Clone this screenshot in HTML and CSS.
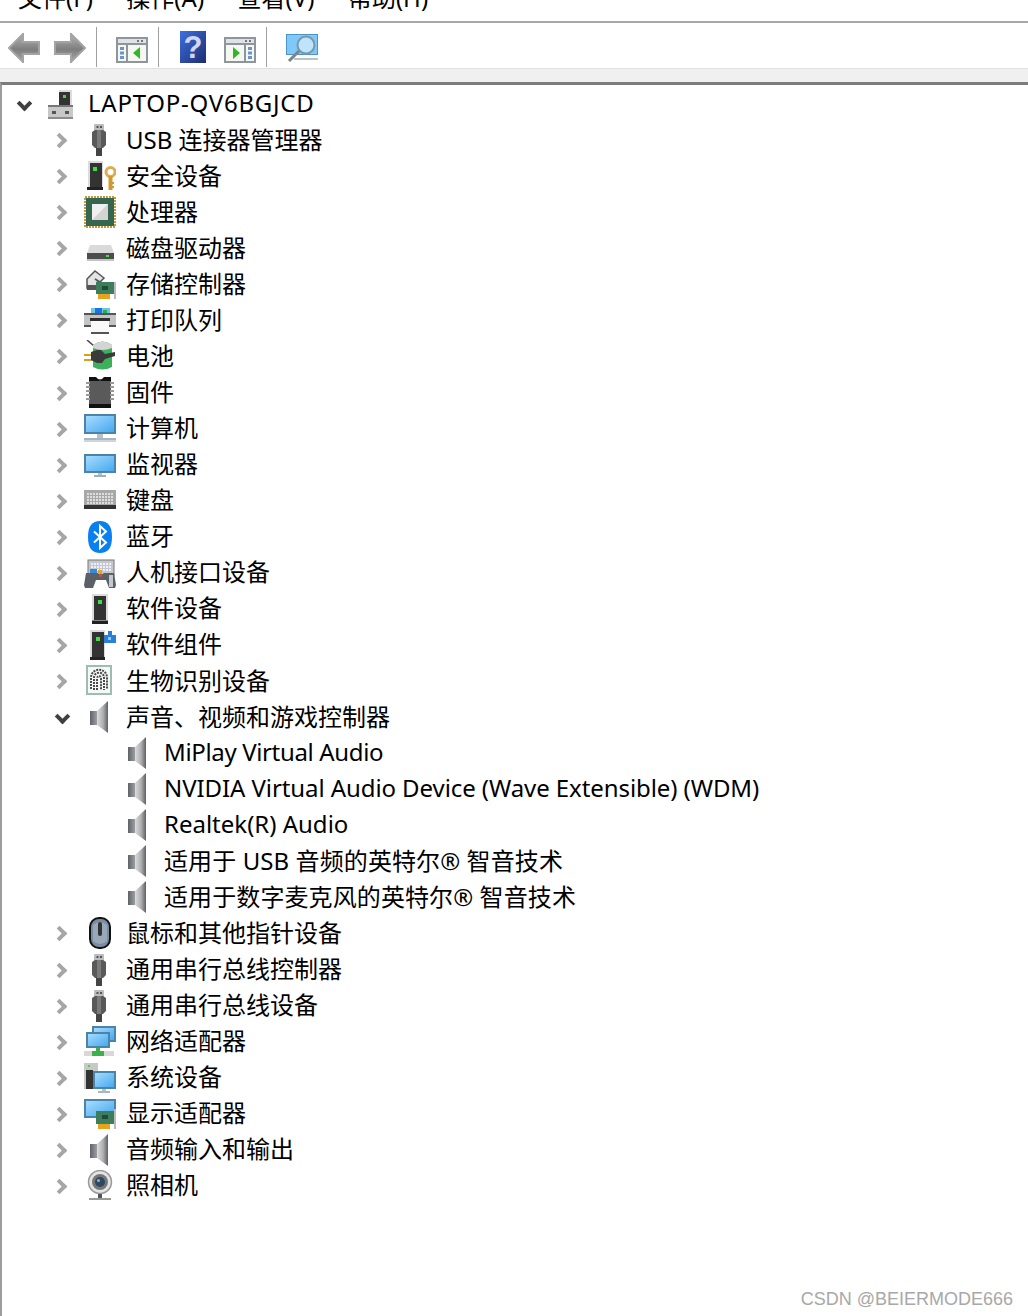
FILE: index.html
```html
<!DOCTYPE html>
<html lang="zh">
  <head>
    <meta charset="utf-8">
    <title>设备管理器</title>
    <link rel="stylesheet" href="styles.css">
  </head>
  <body>
    <svg class="defs" width="0" height="0">
      <defs>
        <linearGradient id="g-gray" x1="0" y1="0" x2="1" y2="0"><stop offset="0" stop-color="#5f6368"/><stop offset="1" stop-color="#a4a6aa"/></linearGradient>
        <linearGradient id="g-arrow" x1="0" y1="0" x2="0" y2="1"><stop offset="0" stop-color="#b4b4b4"/><stop offset="0.55" stop-color="#7e7e7e"/><stop offset="1" stop-color="#a8a8a8"/></linearGradient>
        <linearGradient id="g-screen" x1="0" y1="0" x2="1" y2="1"><stop offset="0" stop-color="#a6dcff"/><stop offset="1" stop-color="#47a8ee"/></linearGradient>
        <linearGradient id="g-cone" x1="0" y1="0" x2="1" y2="0"><stop offset="0" stop-color="#dcdcdc"/><stop offset="0.55" stop-color="#b0b0b0"/><stop offset="1" stop-color="#5c6068"/></linearGradient>
        <linearGradient id="g-help" x1="0" y1="0" x2="1" y2="1"><stop offset="0" stop-color="#3e70e0"/><stop offset="1" stop-color="#1c2c70"/></linearGradient>

        <symbol id="i-host" viewBox="0 0 32 32">
          <path d="M13 2h13v16H13z" fill="#333"/><path d="M13 2h13v2H13zM24 4h2v14h-2z" fill="#ddd"/>
          <rect x="17" y="7" width="3" height="3" fill="#3de03d"/>
          <rect x="2" y="17" width="25" height="14" fill="#c8c8c8"/><rect x="2" y="17" width="25" height="2" fill="#777"/>
          <rect x="6" y="23" width="4" height="3" fill="#555"/><rect x="19" y="23" width="4" height="3" fill="#555"/><rect x="2" y="29" width="25" height="2" fill="#8c8c8c"/>
        </symbol>

        <symbol id="i-usb" viewBox="0 0 32 32">
          <rect x="10" y="0" width="10" height="9" rx="1" fill="#bcbcbc"/><rect x="12.500" y="2" width="2" height="2" fill="#555"/><rect x="16" y="2" width="2" height="2" fill="#555"/>
          <path d="M8 8l3-2h8l3 2v13l-3 3H11l-3-3z" fill="#595959"/><path d="M13 6h4v18h-4z" fill="#7b7b7b"/>
          <rect x="12" y="24" width="6" height="8" fill="#444"/>
        </symbol>

        <symbol id="i-tower" viewBox="0 0 32 32">
          <rect x="8" y="1" width="16" height="26" fill="#dcdcdc"/><rect x="10" y="3" width="12" height="24" fill="#333"/>
          <rect x="14" y="7" width="4" height="4" fill="#3de03d"/><rect x="8" y="27" width="16" height="1" fill="#888"/><rect x="8" y="28" width="16" height="3" fill="#222"/>
        </symbol>

        <symbol id="i-security" viewBox="0 0 32 32">
          <rect x="4" y="1" width="15" height="26" fill="#dcdcdc"/><rect x="6" y="3" width="12" height="24" fill="#333"/>
          <rect x="9" y="7" width="4" height="4" fill="#3de03d"/><rect x="3" y="27" width="16" height="3" fill="#222"/>
          <circle cx="26.500" cy="12" r="4.500" fill="none" stroke="#dcae50" stroke-width="3"/><rect x="24.500" y="16" width="4" height="14" fill="#d19a2f"/><rect x="28" y="22" width="2" height="2" fill="#d19a2f"/><rect x="28" y="26" width="2" height="2" fill="#d19a2f"/>
        </symbol>

        <symbol id="i-cpu" viewBox="0 0 32 32">
          <rect x="1" y="1" width="30" height="30" fill="none" stroke="#c69a3c" stroke-width="2" stroke-dasharray="2 1"/>
          <rect x="2" y="2" width="28" height="28" fill="#356650"/>
          <rect x="8" y="8" width="16" height="16" fill="#d4d4d4"/><path d="M8 8h16L8 24z" fill="#f0f0f0"/>
        </symbol>

        <symbol id="i-disk" viewBox="0 0 32 32">
          <path d="M6 13h21l3 8H3z" fill="#dadada"/><rect x="3" y="21" width="27" height="7" fill="#4c4c4c"/>
          <rect x="3" y="27" width="27" height="2" fill="#c4c4c4"/><rect x="22" y="23" width="3" height="2" fill="#3de03d"/>
        </symbol>

        <symbol id="i-storage" viewBox="0 0 32 32">
          <path d="M3 11l8-8 9 7-4 4-5-3 5 4-6 5H3z" fill="#e4e4e4" stroke="#555" stroke-width="1.500"/>
          <rect x="3" y="17" width="12" height="5" fill="#555"/>
          <rect x="12" y="14" width="18" height="12" fill="#3b7d5c"/><rect x="18" y="18" width="6" height="4" fill="#1f4a36"/>
          <rect x="14" y="26" width="12" height="5" fill="#e8a21c"/><rect x="30" y="14" width="2" height="17" fill="#bbb"/>
        </symbol>

        <symbol id="i-printer" viewBox="0 0 32 32">
          <rect x="7" y="4" width="19" height="7" fill="#6cc6e6"/><rect x="11" y="4" width="7" height="7" fill="#1d74e0"/><rect x="19" y="6" width="4" height="5" fill="#27b04a"/>
          <rect x="0" y="9" width="32" height="13" fill="#c4c4c4"/><rect x="0" y="9" width="32" height="2" fill="#555"/>
          <rect x="6" y="14" width="20" height="3" fill="#2e2e2e"/><rect x="0" y="21" width="7" height="2" fill="#555"/><rect x="25" y="21" width="7" height="2" fill="#555"/>
          <rect x="7" y="17" width="18" height="11" fill="#f8f8f8"/><rect x="7" y="28" width="18" height="2" fill="#555"/>
        </symbol>

        <symbol id="i-battery" viewBox="0 0 32 32">
          <path d="M3 0l7 6" stroke="#444" stroke-width="1.500"/>
          <path d="M9 5q9.500-7 19 0v22q-9.500 5-19 0z" fill="#3cb05a"/><path d="M9 5q9.500-7 19 0v3q-9.500 4-19 0z" fill="#d4d4d4"/>
          <rect x="0" y="14" width="8" height="2" fill="#d1a21a"/><rect x="0" y="19" width="8" height="2" fill="#d1a21a"/>
          <path d="M7 12l6-2h4l4 4 10-2v4l-10 3-3 4h-5l-6-3z" fill="#3a3a3a"/>
        </symbol>

        <symbol id="i-chip" viewBox="0 0 32 32">
          <rect x="5" y="2" width="22" height="28" fill="#5a5a5a"/>
          <path d="M5 0h7l4 4 4-4h7v4H5zM5 27h22v4H5z" fill="#111"/>
          <path d="M2 6h4M2 10h4M2 14h4M2 18h4M2 22h4M26 6h4M26 10h4M26 14h4M26 18h4M26 22h4" stroke="#999" stroke-width="2"/>
        </symbol>

        <symbol id="i-computer" viewBox="0 0 32 32">
          <rect x="0" y="1" width="32" height="20" fill="#4a84a8"/><rect x="2" y="3" width="28" height="16" fill="url(#g-screen)"/>
          <rect x="13" y="21" width="6" height="4" fill="#b8c4cc"/><rect x="0" y="25" width="32" height="2" fill="#a9b6c0"/><rect x="0" y="27" width="32" height="2" fill="#cdd6dc"/>
        </symbol>

        <symbol id="i-monitor" viewBox="0 0 32 32">
          <rect x="0" y="5" width="32" height="19" fill="#4a84a8"/><rect x="2" y="7" width="28" height="15" fill="url(#g-screen)"/>
          <rect x="14" y="24" width="4" height="2" fill="#b8c4cc"/><rect x="10" y="26" width="12" height="2" fill="#9fb0bc"/>
        </symbol>

        <symbol id="i-keyboard" viewBox="0 0 32 32">
          <rect x="0" y="5" width="32" height="16" fill="#a8a8a8"/><rect x="0" y="20" width="32" height="4" fill="#333"/>
          <path d="M3 9h26M3 12h26M3 15h26M3 18h26" stroke="#efefef" stroke-width="1.500" stroke-dasharray="2 1"/>
        </symbol>

        <symbol id="i-bluetooth" viewBox="0 0 32 32">
          <path d="M16 0c8 0 12 5 12 16s-4 16-12 16S4 27 4 16 8 0 16 0z" fill="#0a80f0"/>
          <path d="M10 10.500l12 11-6 5.500V5l6 5.500-12 11" fill="none" stroke="#fff" stroke-width="2"/>
        </symbol>

        <symbol id="i-hid" viewBox="0 0 32 32">
          <rect x="4" y="3" width="26" height="16" fill="#c4c8cc" stroke="#777"/>
          <path d="M7 7h20M7 10h20M7 13h20" stroke="#eef" stroke-width="2" stroke-dasharray="2 1"/>
          <path d="M0 28l2-12h12l3 2 3-2h10l2 12-1 3h-6l-3-8h-10l-3 8H1z" fill="#5a6066"/>
          <rect x="6" y="12" width="7" height="4" fill="#2f8ce0"/><rect x="14" y="13" width="4" height="4" fill="#e8a21c"/><rect x="15" y="17" width="3" height="3" fill="#d64a2a"/>
          <rect x="25" y="18" width="4" height="12" fill="#c4c8cc"/>
        </symbol>

        <symbol id="i-component" viewBox="0 0 32 32">
          <rect x="6" y="1" width="15" height="27" fill="#dcdcdc"/><rect x="8" y="3" width="12" height="25" fill="#333"/>
          <rect x="12" y="8" width="4" height="4" fill="#3de03d"/><rect x="6" y="28" width="15" height="3" fill="#222"/>
          <path d="M20 6h4V2h4v4h4v8H20z" fill="#2a80d8"/><rect x="24" y="8" width="3" height="3" fill="#9cc8f0"/>
        </symbol>

        <symbol id="i-finger" viewBox="0 0 32 32">
          <rect x="3" y="1" width="24" height="28" fill="#f4f8f6" stroke="#9cbcb4" stroke-width="2"/>
          <path d="M7 24V13c0-11 16-11 16 0v11M10 25V13c0-7 10-7 10 0v12M13 25V14c0-4 4-4 4 0v11" fill="none" stroke="#4a4a4a" stroke-width="2" stroke-dasharray="2 1"/>
        </symbol>

        <symbol id="i-speaker" viewBox="0 0 32 32">
          <rect x="6" y="10" width="8" height="14" fill="url(#g-gray)"/>
          <path d="M13 10L24 0v32L13 24z" fill="url(#g-cone)"/>
        </symbol>

        <symbol id="i-mouse" viewBox="0 0 32 32">
          <rect x="6" y="1" width="20" height="30" rx="9" fill="#7a8ca0" stroke="#111" stroke-width="2"/>
          <path d="M9 8q7-6 14 0v16q-7 6-14 0z" fill="#98a8b8"/><rect x="14" y="5" width="4" height="14" rx="2" fill="#333"/>
        </symbol>

        <symbol id="i-network" viewBox="0 0 32 32">
          <rect x="8" y="0" width="24" height="16" fill="#4a84a8"/><rect x="10" y="2" width="20" height="12" fill="url(#g-screen)"/>
          <rect x="2" y="6" width="24" height="16" fill="#4a84a8"/><rect x="4" y="8" width="20" height="12" fill="url(#g-screen)"/>
          <rect x="0" y="25" width="30" height="5" fill="#d8d8d8"/><path d="M12 22h4v3h4v5H8v-5h4z" fill="#3cb04c"/>
        </symbol>

        <symbol id="i-system" viewBox="0 0 32 32">
          <rect x="0" y="1" width="14" height="26" fill="#c8c8c8"/><rect x="2" y="8" width="7" height="19" fill="#333"/><rect x="4" y="3" width="2" height="2" fill="#3de03d"/>
          <rect x="9" y="9" width="23" height="18" fill="#4a84a8"/><rect x="11" y="11" width="19" height="14" fill="url(#g-screen)"/>
          <rect x="18" y="27" width="4" height="2" fill="#b8c4cc"/><rect x="14" y="29" width="12" height="2" fill="#a9b6c0"/>
        </symbol>

        <symbol id="i-display" viewBox="0 0 32 32">
          <rect x="0" y="1" width="32" height="19" fill="#4a84a8"/><rect x="2" y="3" width="28" height="15" fill="url(#g-screen)"/>
          <rect x="12" y="13" width="18" height="13" fill="#3b7d5c"/><rect x="18" y="17" width="6" height="4" fill="#1f4a36"/>
          <rect x="14" y="26" width="12" height="5" fill="#e8a21c"/><rect x="30" y="11" width="2" height="20" fill="#bbb"/>
        </symbol>

        <symbol id="i-camera" viewBox="0 0 32 32">
          <circle cx="16" cy="12" r="11.500" fill="#e4e4e4" stroke="#999" stroke-width="1.500"/>
          <circle cx="16" cy="12" r="8" fill="#777"/><circle cx="16" cy="12" r="5" fill="#2e4860"/><circle cx="14.500" cy="10.500" r="1.500" fill="#8cb4d8"/>
          <rect x="14" y="24" width="4" height="4" fill="#555"/><rect x="5" y="28" width="22" height="2" fill="#999"/>
        </symbol>

        <symbol id="i-pane-left" viewBox="0 0 32 26">
          <rect x="1" y="1" width="30" height="24" fill="#f4f8f0" stroke="#8e959c" stroke-width="2"/>
          <rect x="2" y="2" width="28" height="5" fill="#dfe3e6"/><rect x="2" y="6" width="28" height="2" fill="#8e959c"/>
          <rect x="25" y="3" width="2" height="2" fill="#777"/><rect x="21" y="3" width="2" height="2" fill="#777"/>
          <rect x="10" y="8" width="2" height="16" fill="#8e959c"/>
          <path d="M4 10h4v3H4zM4 14.500h4v3H4zM4 19h4v3H4z" fill="#6a94cc"/>
          <path d="M24 10v12l-7-6z" fill="#35b52c"/>
        </symbol>

        <symbol id="i-pane-right" viewBox="0 0 32 26">
          <rect x="1" y="1" width="30" height="24" fill="#f4f8f0" stroke="#8e959c" stroke-width="2"/>
          <rect x="2" y="2" width="28" height="5" fill="#dfe3e6"/><rect x="2" y="6" width="28" height="2" fill="#8e959c"/>
          <rect x="25" y="3" width="2" height="2" fill="#777"/><rect x="21" y="3" width="2" height="2" fill="#777"/>
          <rect x="20" y="8" width="2" height="16" fill="#8e959c"/>
          <path d="M24 10h4v3h-4zM24 14.500h4v3h-4zM24 19h4v3h-4z" fill="#6a94cc"/>
          <path d="M9 10v12l7-6z" fill="#35b52c"/>
        </symbol>
      </defs>
    </svg>

    <div class="window">
      <div class="menubar">
        <span class="menu-item">文件(F)</span>
        <span class="menu-item">操作(A)</span>
        <span class="menu-item">查看(V)</span>
        <span class="menu-item">帮助(H)</span>
      </div>

      <div class="toolbar">
        <svg class="tool tool-back" width="32" height="30" viewBox="0 0 32 30"><path d="M15 1L1 15l14 14v-8h16V9H15z" fill="url(#g-arrow)" stroke="#a4a4a4" stroke-width="2"/></svg>
        <svg class="tool tool-forward" width="32" height="30" viewBox="0 0 32 30"><path d="M17 1l14 14-14 14v-8H1V9h16z" fill="url(#g-arrow)" stroke="#a4a4a4" stroke-width="2"/></svg>
        <span class="tool-sep sep-a"></span>
        <svg class="tool tool-pane" width="32" height="26"><use href="#i-pane-left"/></svg>
        <span class="tool-sep sep-b"></span>
        <svg class="tool tool-help" width="26" height="32" viewBox="0 0 26 32">
          <rect width="26" height="32" fill="url(#g-help)"/>
          <text class="help-mark" x="13" y="27">?</text>
        </svg>
        <svg class="tool tool-pane-right" width="32" height="26"><use href="#i-pane-right"/></svg>
        <span class="tool-sep sep-c"></span>
        <svg class="tool tool-scan" width="32" height="30" viewBox="0 0 32 30">
          <rect x="0" y="1" width="32" height="21" fill="#4a94c8"/><rect x="1" y="2" width="30" height="19" fill="#7fc8fa"/>
          <circle cx="20" cy="12" r="8.500" fill="#bde4fb" stroke="#7b97a8" stroke-width="2"/>
          <path d="M13 18L3 28" stroke="#7b8288" stroke-width="3"/>
          <rect x="8" y="25" width="24" height="2" fill="#b8c4cc"/>
        </svg>
      </div>
      <div class="strip"></div>

      <div class="tree">
        <div class="row level-0"><span class="chev open"></span><svg class="icon"><use href="#i-host"/></svg><span class="label label-wide">LAPTOP-QV6BGJCD</span></div>
        <div class="row level-1"><span class="chev"></span><svg class="icon"><use href="#i-usb"/></svg><span class="label">USB 连接器管理器</span></div>
        <div class="row level-1"><span class="chev"></span><svg class="icon"><use href="#i-security"/></svg><span class="label">安全设备</span></div>
        <div class="row level-1"><span class="chev"></span><svg class="icon"><use href="#i-cpu"/></svg><span class="label">处理器</span></div>
        <div class="row level-1"><span class="chev"></span><svg class="icon"><use href="#i-disk"/></svg><span class="label">磁盘驱动器</span></div>
        <div class="row level-1"><span class="chev"></span><svg class="icon"><use href="#i-storage"/></svg><span class="label">存储控制器</span></div>
        <div class="row level-1"><span class="chev"></span><svg class="icon"><use href="#i-printer"/></svg><span class="label">打印队列</span></div>
        <div class="row level-1"><span class="chev"></span><svg class="icon"><use href="#i-battery"/></svg><span class="label">电池</span></div>
        <div class="row level-1"><span class="chev"></span><svg class="icon"><use href="#i-chip"/></svg><span class="label">固件</span></div>
        <div class="row level-1"><span class="chev"></span><svg class="icon"><use href="#i-computer"/></svg><span class="label">计算机</span></div>
        <div class="row level-1"><span class="chev"></span><svg class="icon"><use href="#i-monitor"/></svg><span class="label">监视器</span></div>
        <div class="row level-1"><span class="chev"></span><svg class="icon"><use href="#i-keyboard"/></svg><span class="label">键盘</span></div>
        <div class="row level-1"><span class="chev"></span><svg class="icon"><use href="#i-bluetooth"/></svg><span class="label">蓝牙</span></div>
        <div class="row level-1"><span class="chev"></span><svg class="icon"><use href="#i-hid"/></svg><span class="label">人机接口设备</span></div>
        <div class="row level-1"><span class="chev"></span><svg class="icon"><use href="#i-tower"/></svg><span class="label">软件设备</span></div>
        <div class="row level-1"><span class="chev"></span><svg class="icon"><use href="#i-component"/></svg><span class="label">软件组件</span></div>
        <div class="row level-1"><span class="chev"></span><svg class="icon"><use href="#i-finger"/></svg><span class="label">生物识别设备</span></div>
        <div class="row level-1"><span class="chev open"></span><svg class="icon"><use href="#i-speaker"/></svg><span class="label">声音、视频和游戏控制器</span></div>
        <div class="row level-2"><svg class="icon"><use href="#i-speaker"/></svg><span class="label label-tight">MiPlay Virtual Audio</span></div>
        <div class="row level-2"><svg class="icon"><use href="#i-speaker"/></svg><span class="label label-snug">NVIDIA Virtual Audio Device (Wave Extensible) (WDM)</span></div>
        <div class="row level-2"><svg class="icon"><use href="#i-speaker"/></svg><span class="label">Realtek(R) Audio</span></div>
        <div class="row level-2"><svg class="icon"><use href="#i-speaker"/></svg><span class="label label-loose">适用于 USB 音频的英特尔® 智音技术</span></div>
        <div class="row level-2"><svg class="icon"><use href="#i-speaker"/></svg><span class="label label-loose">适用于数字麦克风的英特尔® 智音技术</span></div>
        <div class="row level-1"><span class="chev"></span><svg class="icon"><use href="#i-mouse"/></svg><span class="label">鼠标和其他指针设备</span></div>
        <div class="row level-1"><span class="chev"></span><svg class="icon"><use href="#i-usb"/></svg><span class="label">通用串行总线控制器</span></div>
        <div class="row level-1"><span class="chev"></span><svg class="icon"><use href="#i-usb"/></svg><span class="label">通用串行总线设备</span></div>
        <div class="row level-1"><span class="chev"></span><svg class="icon"><use href="#i-network"/></svg><span class="label">网络适配器</span></div>
        <div class="row level-1"><span class="chev"></span><svg class="icon"><use href="#i-system"/></svg><span class="label">系统设备</span></div>
        <div class="row level-1"><span class="chev"></span><svg class="icon"><use href="#i-display"/></svg><span class="label">显示适配器</span></div>
        <div class="row level-1"><span class="chev"></span><svg class="icon"><use href="#i-speaker"/></svg><span class="label">音频输入和输出</span></div>
        <div class="row level-1"><span class="chev"></span><svg class="icon"><use href="#i-camera"/></svg><span class="label">照相机</span></div>
      </div>
    </div>

    <div class="watermark">CSDN @BEIERMODE666</div>
  </body>
</html>
```

FILE: styles.css
```css
body {
  margin: 0;
  padding: 0;
  background-color: #ffffff;
  font-family: "Noto Sans", "Noto Sans CJK SC", sans-serif;
  color: #000000;
  overflow: hidden;
}

.defs {
  display: block;
  height: 0;
}

.window {
  display: flex;
  flex-direction: column;
  height: 1316px;
}

/* menu bar is cut off at the top of the screenshot */
.menubar {
  display: flex;
  flex: none;
  height: 21px;
  padding-left: 18px;
  gap: 33.5px;
  overflow: hidden;
  border-bottom: 2px solid #a8a8a8;
  font-size: 24px;
  line-height: 26px;
}

.menu-item {
  margin-top: -15px;
  white-space: nowrap;
}

.toolbar {
  display: flex;
  flex: none;
  align-items: center;
  height: 45px;
  padding-left: 8px;
  box-sizing: border-box;
}

.tool {
  display: block;
  flex: none;
}

.tool-back {
  margin-top: 5px;
}

.tool-forward {
  margin-left: 14px;
  margin-top: 5px;
}

.tool-sep {
  flex: none;
  width: 1px;
  height: 40px;
  margin-top: 3px;
  background-color: #a0a0a0;
}

.sep-a {
  margin-left: 10px;
}

.tool-pane {
  margin-left: 19px;
  margin-top: 9px;
}

.sep-b {
  margin-left: 10px;
}

.tool-help {
  margin-left: 21px;
  margin-top: 3px;
}

.tool-pane-right {
  margin-left: 18px;
  margin-top: 9px;
}

.sep-c {
  margin-left: 10px;
}

.tool-scan {
  margin-left: 19px;
  margin-top: 5px;
}

.help-mark {
  font-family: "Liberation Sans", sans-serif;
  font-size: 31px;
  font-weight: bold;
  fill: #cfd6f4;
  text-anchor: middle;
}

.strip {
  flex: none;
  height: 13px;
  background-color: #f0f0f0;
  border-top: 1px solid #e0e0e0;
}

.tree {
  flex: 1;
  border-top: 3px solid #7c7c7c;
  border-left: 2px solid #9c9c9c;
  padding-top: 1px;
}

.row {
  display: flex;
  align-items: center;
  height: 36.07px;
  font-size: 24px;
  white-space: nowrap;
}

.level-0 {
  padding-left: 14px;
}

.level-1 {
  padding-left: 52px;
}

.level-2 {
  padding-left: 120px;
}

.chev {
  position: relative;
  flex: none;
  width: 16px;
  height: 16px;
  margin-right: 14px;
}

.chev::before {
  content: "";
  position: absolute;
  left: 0;
  top: 3px;
  width: 7px;
  height: 7px;
  border-top: 4px solid #a6a6a6;
  border-right: 4px solid #a6a6a6;
  transform: rotate(45deg);
}

.chev.open::before {
  left: 3px;
  top: 2px;
  border-color: #404040;
  transform: rotate(135deg);
}

.icon {
  flex: none;
  width: 32px;
  height: 32px;
  margin-right: 10px;
}

.label {
  padding-bottom: 4px;
}

/* the original UI font has wider capitals and narrower lowercase */
.label-wide {
  letter-spacing: 0.75px;
}

.label-tight {
  letter-spacing: -0.35px;
}

.label-snug {
  letter-spacing: -0.08px;
}

.label-loose {
  letter-spacing: 0.1px;
}

.watermark {
  position: absolute;
  right: 15px;
  bottom: 6px;
  font-family: "Liberation Sans", sans-serif;
  font-size: 18px;
  color: #a8a8a8;
}
```
